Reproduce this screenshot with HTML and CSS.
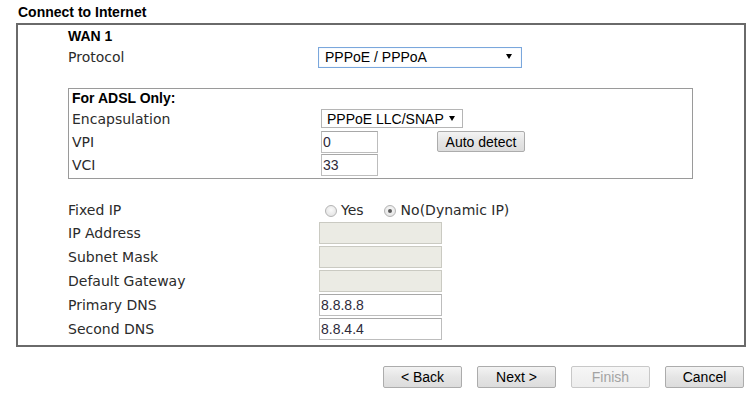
FILE: index.html
```html
<!DOCTYPE html>
<html>
<head>
<meta charset="utf-8">
<link rel="stylesheet" href="styles.css">
</head>
<body>
<div class="title">Connect to Internet</div>
<div class="panel">
  <div class="wan">WAN 1</div>
  <div class="row row-proto">
    <span class="label">Protocol</span>
    <div class="select select-proto"><span>PPPoE / PPPoA</span><i class="arrow"></i></div>
  </div>
  <div class="adsl">
    <div class="adsl-head">For ADSL Only:</div>
    <div class="arow">
      <span class="alabel">Encapsulation</span>
      <div class="select select-encap"><span>PPPoE LLC/SNAP</span><i class="arrow"></i></div>
    </div>
    <div class="arow">
      <span class="alabel">VPI</span>
      <input class="txt short" type="text" value="0">
      <button class="btn auto" type="button">Auto detect</button>
    </div>
    <div class="arow">
      <span class="alabel">VCI</span>
      <input class="txt short" type="text" value="33">
    </div>
  </div>
  <div class="row fixed">
    <span class="label">Fixed IP</span>
    <label class="opt opt-yes"><input class="radio" type="radio" name="fixed">Yes</label>
    <label class="opt opt-no"><input class="radio" type="radio" name="fixed" checked>No(Dynamic IP)</label>
  </div>
  <div class="row irow"><span class="label">IP Address</span><input class="txt" type="text" disabled></div>
  <div class="row irow"><span class="label">Subnet Mask</span><input class="txt" type="text" disabled></div>
  <div class="row irow"><span class="label">Default Gateway</span><input class="txt" type="text" disabled></div>
  <div class="row irow"><span class="label">Primary DNS</span><input class="txt" type="text" value="8.8.8.8"></div>
  <div class="row irow"><span class="label">Second DNS</span><input class="txt" type="text" value="8.8.4.4"></div>
</div>
<div class="actions">
  <button class="btn nav" type="button">&lt; Back</button>
  <button class="btn nav" type="button">Next &gt;</button>
  <button class="btn nav" type="button" disabled>Finish</button>
  <button class="btn nav" type="button">Cancel</button>
</div>
</body>
</html>
```
FILE: styles.css
```css
html, body {
  margin: 0;
  padding: 0;
  background: #ffffff;
}
body {
  width: 754px;
  height: 399px;
  overflow: hidden;
  font-family: "DejaVu Sans", Verdana, sans-serif;
  font-size: 14px;
  color: #2b2b2b;
}
.title {
  height: 22px;
  padding: 1px 0 0 18px;
  line-height: 22px;
  font-family: "Liberation Sans", Arial, sans-serif;
  font-weight: bold;
  font-size: 14px;
  color: #000000;
}
.panel {
  margin-left: 16px;
  width: 730px;
  box-sizing: border-box;
  border: 2px solid #6a6a6a;
  padding: 1px 0 4px 50px;
}
.wan {
  height: 20px;
  line-height: 20px;
  font-family: "Liberation Sans", Arial, sans-serif;
  font-weight: bold;
  font-size: 14px;
  color: #000000;
}
.row {
  display: flex;
  align-items: center;
}
.label {
  width: 251px;
  flex: none;
}
.row-proto {
  height: 22px;
}
.select {
  position: relative;
  box-sizing: border-box;
  display: flex;
  align-items: center;
  background: #ffffff;
  font-family: "Liberation Sans", Arial, sans-serif;
  font-size: 14px;
  color: #000000;
}
.select-proto {
  margin-left: -1px;
  width: 204px;
  height: 21px;
  border: 1px solid #7aa7dc;
  box-shadow: inset 0 0 1px #a9c8ee;
  padding-left: 6px;
}
.select-encap {
  width: 142px;
  height: 19px;
  border: 1px solid #b5b5b5;
  padding-left: 5px;
}
.arrow {
  position: absolute;
  top: 50%;
  margin-top: -3px;
  width: 0;
  height: 0;
  border-left: 3px solid transparent;
  border-right: 3px solid transparent;
  border-top: 5px solid #000000;
}
.select-proto .arrow {
  right: 9px;
}
.select-encap .arrow {
  right: 7px;
}
.adsl {
  margin-top: 20px;
  width: 625px;
  box-sizing: border-box;
  border: 1px solid #9a9a9a;
  padding: 0 0 2px 3px;
}
.adsl-head {
  height: 18px;
  line-height: 18px;
  font-family: "Liberation Sans", Arial, sans-serif;
  font-weight: bold;
  font-size: 14px;
  color: #000000;
}
.arow {
  display: flex;
  align-items: center;
  height: 23px;
}
.alabel {
  width: 249px;
  flex: none;
}
.txt {
  box-sizing: border-box;
  width: 123px;
  height: 22px;
  margin: 0;
  padding: 0 1px;
  border: 1px solid #bdbdbd;
  border-top-color: #a8a8a8;
  background: #ffffff;
  font-family: "Liberation Sans", Arial, sans-serif;
  font-size: 14px;
  color: #2e2a3a;
  outline: none;
}
.txt:disabled {
  background: #ebebe4;
  border-color: #cacac2;
}
.txt.short {
  width: 57px;
}
.btn {
  box-sizing: border-box;
  margin: 0;
  padding: 0;
  border: 1px solid #acacac;
  border-radius: 2px;
  background: linear-gradient(#f3f3f3, #e5e5e5 50%, #dcdcdc);
  font-family: "Liberation Sans", Arial, sans-serif;
  font-size: 14px;
  color: #000000;
}
.btn:disabled {
  color: #a3a3a3;
  border-color: #c8c8c8;
  background: linear-gradient(#f6f6f6, #ededed);
}
.auto {
  margin-left: 59px;
  width: 88px;
  height: 21px;
}
.fixed {
  margin-top: 20px;
  height: 22px;
}
.irow {
  height: 24px;
}
.opt {
  display: flex;
  align-items: center;
}
.radio {
  appearance: none;
  -webkit-appearance: none;
  box-sizing: border-box;
  width: 12px;
  height: 12px;
  margin: 2px 4px 0 6px;
  border-radius: 50%;
  border: 1px solid #b4b4b4;
  background: radial-gradient(circle at 50% 40%, #fafafa, #dedede);
  position: relative;
}
.radio:checked::after {
  content: "";
  position: absolute;
  left: 3px;
  top: 3px;
  width: 4px;
  height: 4px;
  border-radius: 50%;
  background: #5a5a5a;
}
.opt-no .radio {
  margin-left: 20px;
  margin-right: 5px;
}
.actions {
  margin: 19px 0 0 16px;
  width: 730px;
  box-sizing: border-box;
  padding-right: 2px;
  display: flex;
  justify-content: flex-end;
  gap: 15px;
}
.nav {
  width: 79px;
  height: 22px;
}
```
